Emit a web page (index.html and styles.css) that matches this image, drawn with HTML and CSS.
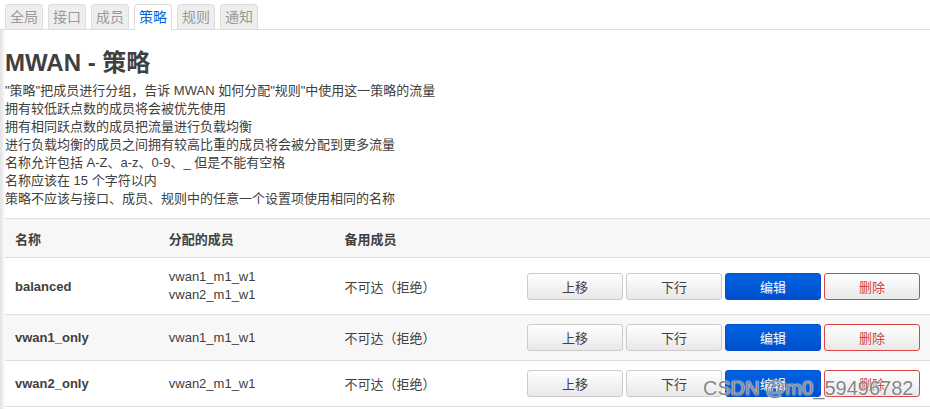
FILE: index.html
```html
<!DOCTYPE html>
<html lang="zh-CN">
<head>
  <meta charset="UTF-8">
  <title>MWAN - 策略</title>
  <link rel="stylesheet" href="styles.css">
</head>
<body>
  <div class="main">
    <ul class="tabs">
      <li class="tab">全局</li>
      <li class="tab">接口</li>
      <li class="tab">成员</li>
      <li class="tab active">策略</li>
      <li class="tab">规则</li>
      <li class="tab">通知</li>
    </ul>

    <h2 class="title">MWAN - 策略</h2>
    <div class="desc">
      <p>"策略"把成员进行分组，告诉 MWAN 如何分配"规则"中使用这一策略的流量</p>
      <p>拥有较低跃点数的成员将会被优先使用</p>
      <p>拥有相同跃点数的成员把流量进行负载均衡</p>
      <p>进行负载均衡的成员之间拥有较高比重的成员将会被分配到更多流量</p>
      <p>名称允许包括 A-Z、a-z、0-9、_ 但是不能有空格</p>
      <p>名称应该在 15 个字符以内</p>
      <p>策略不应该与接口、成员、规则中的任意一个设置项使用相同的名称</p>
    </div>

    <table class="policy-table">
      <tr class="head">
        <th class="col-name">名称</th>
        <th class="col-members">分配的成员</th>
        <th class="col-backup">备用成员</th>
        <th></th>
      </tr>
      <tr class="row tall">
        <td class="col-name"><b>balanced</b></td>
        <td class="col-members members">vwan1_m1_w1<br>vwan2_m1_w1</td>
        <td class="col-backup">不可达（拒绝）</td>
        <td class="actions">
          <button class="btn">上移</button><button class="btn">下行</button><button class="btn btn-edit">编辑</button><button class="btn btn-remove">删除</button>
        </td>
      </tr>
      <tr class="row alt">
        <td class="col-name"><b>vwan1_only</b></td>
        <td class="col-members">vwan1_m1_w1</td>
        <td class="col-backup">不可达（拒绝）</td>
        <td class="actions">
          <button class="btn">上移</button><button class="btn">下行</button><button class="btn btn-edit">编辑</button><button class="btn btn-remove">删除</button>
        </td>
      </tr>
      <tr class="row">
        <td class="col-name"><b>vwan2_only</b></td>
        <td class="col-members">vwan2_m1_w1</td>
        <td class="col-backup">不可达（拒绝）</td>
        <td class="actions">
          <button class="btn">上移</button><button class="btn">下行</button><button class="btn btn-edit">编辑</button><button class="btn btn-remove">删除</button>
        </td>
      </tr>
    </table>
  </div>

  <div class="watermark">CSDN @m0_59496782</div>
</body>
</html>
```

FILE: styles.css
```css
body {
  margin: 0;
  font-family: 'Liberation Sans', 'Noto Sans CJK SC', sans-serif;
  font-size: 13px;
  color: #404040;
  background: #fff;
  overflow: hidden;
}
.main {
  padding-left: 5px;
  min-height: 409px;
  background: linear-gradient(to right, #e2e2e2 0, #f0f0f0 3px, #fff 5px) no-repeat 0 29px / 5px 100%;
}
.tabs {
  list-style: none;
  margin: 0 0 0 -5px;
  padding: 4px 0 0 5px;
  display: flex;
  gap: 5px;
  border-bottom: 1px solid #ddd;
}
.tab {
  height: 24px;
  line-height: 24px;
  padding: 0 4px;
  font-size: 14px;
  color: #999;
  background: #eee;
  border: 1px solid #ddd;
  border-bottom: none;
  border-radius: 4px 4px 0 0;
}
.tab.active {
  color: #0069d6;
  background: #fff;
  margin-bottom: -1px;
  height: 25px;
}
.title {
  margin: 18px 0 4px;
  font-size: 24px;
  line-height: 30px;
  font-weight: bold;
  color: #404040;
}
.desc p {
  margin: 0;
  line-height: 18px;
}
.policy-table {
  margin-top: 10px;
  width: 925px;
  border-collapse: collapse;
}
.policy-table th,
.policy-table td {
  text-align: left;
  padding: 0 10px;
  border-top: 1px solid #ddd;
  vertical-align: middle;
}
.policy-table .head th {
  height: 38px;
  background: #f7f7f7;
  font-weight: bold;
}
.col-name { width: 134px; }
.col-members { width: 156px; }
.col-backup { width: 160px; }
.row td {
  height: 45px;
  border-bottom: 1px solid #ddd;
}
.row.tall td { height: 56px; }
.row.alt td { background: #f7f7f7; }
.members { line-height: 18px; }
.actions {
  text-align: right;
  white-space: nowrap;
  font-size: 0;
}
.btn {
  width: 96px;
  height: 27px;
  margin-left: 3px;
  padding: 0;
  font-family: 'Liberation Sans', 'Noto Sans CJK SC', sans-serif;
  font-size: 13px;
  color: #404040;
  background: linear-gradient(#fff, #e8e8e8);
  border: 1px solid #ccc;
  border-radius: 3px;
  cursor: pointer;
}
.btn-edit {
  color: #fff;
  background: linear-gradient(#0062e0, #004fcc);
  border-color: #0050d0;
}
.btn-remove {
  color: #c44;
  border-color: #d44;
}
.watermark {
  position: absolute;
  left: 703px;
  top: 377px;
  font-size: 20px;
  color: rgba(110, 110, 110, 0.85);
  text-shadow: 0 0 2px #fff, 0 0 1px #fff;
}
```
